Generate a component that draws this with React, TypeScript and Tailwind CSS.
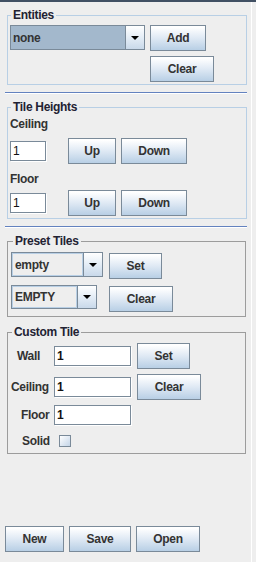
import React from "react";

type BtnProps = { label: string; w: string; extra?: string };

function Btn({ label, w, extra = "" }: BtnProps) {
  return (
    <button
      className={`${w} ${extra} h-[26px] shrink-0 border border-[#7a8a99] bg-linear-to-b from-white from-[5%] via-[#dfe9f4] to-[#b8cfe5] text-[12px] font-bold tracking-[-0.3px] text-[#333333]`}
    >
      {label}
    </button>
  );
}

function Arrow() {
  return (
    <svg width="8" height="4" viewBox="0 0 8 4">
      <polygon points="0,0 8,0 4,4" fill="#000" />
    </svg>
  );
}

type ComboProps = { text: string; w: string; h: string; selected?: boolean };

function Combo({ text, w, h, selected }: ComboProps) {
  return (
    <div className={`${w} ${h} flex shrink-0 border border-[#7a8a99]`}>
      <div
        className={`flex flex-1 items-center pl-[2px] text-[12px] font-bold tracking-[-0.3px] text-[#333333] ${
          selected ? "bg-[#a3b8cc]" : "bg-[#eeeeee] border border-[#b8cfe5]"
        }`}
      >
        {text}
      </div>
      <div className="flex w-[19px] items-center justify-center border-l border-[#7a8a99] bg-linear-to-b from-white via-[#e4edf6] to-[#c9d9ea]">
        <Arrow />
      </div>
    </div>
  );
}

function Field({ w, extra = "" }: { w: string; extra?: string }) {
  return (
    <div
      className={`${w} ${extra} flex h-[20px] shrink-0 items-center border border-[#7a8a99] bg-white pl-[2px] text-[12px] text-[#111] shadow-[1px_1px_0_#ffffff]`}
    >
      1
    </div>
  );
}

const legend = "px-[2px] text-[12px] font-bold leading-[15px] tracking-[-0.3px] text-[#222233]";

export default function App() {
  return (
    <div className="flex h-[562px] w-[256px] flex-col overflow-hidden bg-[#eeeeee] font-['Liberation_Sans',Arial,sans-serif]">
      <div className="h-[2px] w-full shrink-0 bg-[#415063]" />
      <div className="flex flex-1">
        <div className="flex w-[251px] flex-col pb-[10px]">
          {/* Entities */}
          <fieldset className="ml-[7px] mt-[6px] w-[240px] border border-[#b8cfe5] pb-[2px] pl-[2px] pt-[2px]">
            <legend className={`${legend} ml-[1px]`}>Entities</legend>
            <div className="grid grid-cols-[135px_auto] gap-x-[5px] gap-y-[5px]">
              <Combo text="none" w="w-[135px]" h="h-[25px]" selected />
              <Btn label="Add" w="w-[56px]" />
              <div />
              <Btn label="Clear" w="w-[64px]" />
            </div>
          </fieldset>

          <div className="ml-[5px] mt-[7px] h-[1px] w-[242px] bg-[#6382bf]" />
          <div className="ml-[5px] h-[1px] w-[242px] bg-white" />

          {/* Tile Heights */}
          <fieldset className="ml-[7px] mt-[6px] w-[240px] border border-[#b8cfe5] pb-[2px] pl-[2px] pt-[2px]">
            <legend className={`${legend} ml-[1px]`}>Tile Heights</legend>
            <div className="text-[12px] font-bold leading-[15px] tracking-[-0.3px] text-[#333333]">Ceiling</div>
            <div className="mt-[6px] flex items-center">
              <Field w="w-[36px]" />
              <Btn label="Up" w="w-[48px]" extra="ml-[22px]" />
              <Btn label="Down" w="w-[66px]" extra="ml-[5px]" />
            </div>
            <div className="mt-[8px] text-[12px] font-bold leading-[15px] tracking-[-0.3px] text-[#333333]">Floor</div>
            <div className="mt-[3px] flex items-center">
              <Field w="w-[36px]" />
              <Btn label="Up" w="w-[48px]" extra="ml-[22px]" />
              <Btn label="Down" w="w-[66px]" extra="ml-[5px]" />
            </div>
          </fieldset>

          <div className="ml-[5px] mt-[7px] h-[1px] w-[242px] bg-[#6382bf]" />
          <div className="ml-[5px] h-[1px] w-[242px] bg-white" />

          {/* Preset Tiles */}
          <fieldset className="ml-[7px] mt-[6px] w-[239px] border border-[#9c9c9c] pb-[4px] pl-[3px] pt-[3px]">
            <legend className={`${legend} ml-[2px]`}>Preset Tiles</legend>
            <div className="flex items-start">
              <Combo text="empty" w="w-[92px]" h="h-[25px]" />
              <Btn label="Set" w="w-[53px]" extra="ml-[6px] mt-[1px]" />
            </div>
            <div className="mt-[6px] flex items-start">
              <Combo text="EMPTY" w="w-[86px]" h="h-[24px]" />
              <Btn label="Clear" w="w-[64px]" extra="ml-[12px] mt-[1px]" />
            </div>
          </fieldset>

          {/* Custom Tile */}
          <fieldset className="ml-[7px] mt-[8px] w-[239px] border border-[#9c9c9c] pb-[5px] pl-[3px] pt-[3px]">
            <legend className={`${legend} ml-[1px]`}>Custom Tile</legend>
            <div className="flex items-center text-[12px] font-bold tracking-[-0.3px] text-[#333333]">
              <span className="w-[43px] pl-[6px]">Wall</span>
              <Field w="w-[77px]" />
              <Btn label="Set" w="w-[53px]" extra="ml-[6px]" />
            </div>
            <div className="mt-[5px] flex items-center text-[12px] font-bold tracking-[-0.3px] text-[#333333]">
              <span className="w-[43px]">Ceiling</span>
              <Field w="w-[77px]" />
              <Btn label="Clear" w="w-[64px]" extra="ml-[6px]" />
            </div>
            <div className="mt-[5px] flex items-center text-[12px] font-bold tracking-[-0.3px] text-[#333333]">
              <span className="w-[43px] pl-[10px]">Floor</span>
              <Field w="w-[77px]" />
            </div>
            <div className="mt-[9px] flex h-[14px] items-center text-[12px] font-bold tracking-[-0.3px] text-[#333333]">
              <span className="w-[43px] pl-[11px]">Solid</span>
              <div className="ml-[5px] h-[12px] w-[12px] border border-[#7a8a99] bg-linear-to-br from-white to-[#c4d5e8]" />
            </div>
          </fieldset>

          <div className="mt-auto ml-[5px] flex gap-[5px]">
            <Btn label="New" w="w-[59px]" />
            <Btn label="Save" w="w-[62px]" />
            <Btn label="Open" w="w-[64px]" />
          </div>
        </div>
        <div className="w-[1px] bg-white" />
        <div className="flex-1 bg-[#eeeeee]" />
      </div>
    </div>
  );
}
